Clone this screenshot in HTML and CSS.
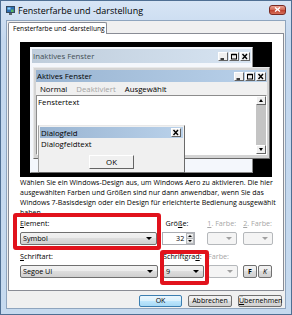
FILE: index.html
```html
<!DOCTYPE html>
<html>

<head>
    <meta charset="UTF-8" />
    <title>Fensterfarbe und -darstellung</title>
    <link rel="stylesheet" href="styles.css">
</head>

<body>
    <div class="window">
        <div class="titlebar">
            <svg class="app-icon" width="9" height="9" viewBox="0 0 9 9">
                <rect x="0.5" y="0.5" width="8" height="6" fill="#2f6fb3" stroke="#34495e" />
                <rect x="1.5" y="1.5" width="3" height="2" fill="#8fd6ff" />
                <rect x="5" y="3.5" width="2.5" height="2.5" fill="#5cb85c" />
                <rect x="3" y="7" width="3" height="2" fill="#5a6670" />
            </svg>
            <span class="title">Fensterfarbe und -darstellung</span>
            <span class="close">
                <svg width="7" height="5" viewBox="0 0 7 5">
                    <path d="M1 0.5 L6 4.5 M6 0.5 L1 4.5" stroke="#fff" stroke-width="1.4" />
                </svg>
            </span>
        </div>

        <div class="client">
            <div class="tabs">
                <div class="tab">Fensterfarbe und -darstellung</div>
            </div>

            <div class="panel">
                <!-- preview of the window elements -->
                <div class="preview">
                    <div class="pwin inactive">
                        <div class="caption">
                            <span class="cap-text">Inaktives Fenster</span>
                            <span class="capbtns">
                                <span class="cb"><svg width="8" height="7" viewBox="0 0 8 7"><path d="M1.5 6 H5" stroke="#000" stroke-width="1.5" /></svg></span>
                                <span class="cb"><svg width="8" height="7" viewBox="0 0 8 7"><rect x="1.5" y="1.5" width="5" height="4.5" fill="none" stroke="#000" /><path d="M1.5 1.5 H6.5" stroke="#000" stroke-width="1.5" /></svg></span>
                                <span class="cb cb-x"><svg width="8" height="7" viewBox="0 0 8 7"><path d="M1.5 1 L6 6 M6 1 L1.5 6" stroke="#000" stroke-width="1.4" /></svg></span>
                            </span>
                        </div>
                    </div>

                    <div class="pwin active">
                        <div class="caption">
                            <span class="cap-text">Aktives Fenster</span>
                            <span class="capbtns">
                                <span class="cb"><svg width="8" height="7" viewBox="0 0 8 7"><path d="M1.5 6 H5" stroke="#000" stroke-width="1.5" /></svg></span>
                                <span class="cb"><svg width="8" height="7" viewBox="0 0 8 7"><rect x="1.5" y="1.5" width="5" height="4.5" fill="none" stroke="#000" /><path d="M1.5 1.5 H6.5" stroke="#000" stroke-width="1.5" /></svg></span>
                                <span class="cb cb-x"><svg width="8" height="7" viewBox="0 0 8 7"><path d="M1.5 1 L6 6 M6 1 L1.5 6" stroke="#000" stroke-width="1.4" /></svg></span>
                            </span>
                        </div>
                        <div class="menu">
                            <span>Normal</span>
                            <span class="dis">Deaktiviert</span>
                            <span>Ausgewählt</span>
                        </div>
                        <div class="textarea">
                            <span class="ftext">Fenstertext</span>
                            <div class="scroll">
                                <span class="sbtn"><i class="tri-up"></i></span>
                                <span class="sbtn"><i class="tri-down"></i></span>
                            </div>
                        </div>
                    </div>

                    <div class="pwin dialog">
                        <div class="caption">
                            <span class="cap-text">Dialogfeld</span>
                            <span class="cb cb-x"><svg width="8" height="7" viewBox="0 0 8 7"><path d="M1.5 1 L6 6 M6 1 L1.5 6" stroke="#000" stroke-width="1.4" /></svg></span>
                        </div>
                        <div class="dtext">Dialogfeldtext</div>
                        <div class="dbtn">OK</div>
                    </div>
                </div>

                <p class="info">
                    Wählen Sie ein Windows-Design aus, um Windows Aero zu aktivieren. Die hier<br />
                    ausgewählten Farben und Größen sind nur dann anwendbar, wenn Sie das<br />
                    Windows 7-Basisdesign oder ein Design für erleichterte Bedienung ausgewählt<br />
                    haben.
                </p>

                <div class="fields">
                    <div class="row">
                        <div class="field f-wide">
                            <label><u>E</u>lement:</label>
                            <div class="combo"><span>Symbol</span><i class="arrow"></i></div>
                        </div>
                        <div class="field f-size">
                            <label class="indent">Grö<u>ß</u>e:</label>
                            <div class="spin">
                                <span class="spin-value">32</span>
                                <span class="spinbtns">
                                    <span class="spinbtn"><i class="tri-up"></i></span>
                                    <span class="spinbtn"><i class="tri-down"></i></span>
                                </span>
                            </div>
                        </div>
                        <div class="field f-color first-color">
                            <label class="off"><u>1</u>. Farbe:</label>
                            <div class="combo off"><i class="arrow"></i></div>
                        </div>
                        <div class="field f-color second-color">
                            <label class="off"><u>2</u>. Farbe:</label>
                            <div class="combo off"><i class="arrow"></i></div>
                        </div>
                    </div>
                    <div class="row">
                        <div class="field f-wide">
                            <label><u>S</u>chriftart:</label>
                            <div class="combo"><span>Segoe UI</span><i class="arrow"></i></div>
                        </div>
                        <div class="field f-grade">
                            <label>Schriftgra<u>d</u>:</label>
                            <div class="combo"><span>9</span><i class="arrow"></i></div>
                        </div>
                        <div class="field f-color font-color">
                            <label class="off">Farbe:</label>
                            <div class="combo off"><i class="arrow"></i></div>
                        </div>
                        <button class="btn small bold">F</button>
                        <button class="btn small italic">K</button>
                    </div>
                </div>

                <div class="mark mark-element"></div>
                <div class="mark mark-grade"></div>
            </div>

            <div class="actions">
                <button class="btn default">OK</button>
                <button class="btn">Abbrechen</button>
                <button class="btn"><u>Ü</u>bernehmen</button>
            </div>
        </div>
    </div>
</body>

</html>
```

FILE: styles.css
```css
* {
    box-sizing: border-box;
}

body {
    margin: 0;
    background: #fff;
    font-family: "Open Sans", "Noto Sans", sans-serif;
    font-size: 7.2px;
    color: #000;
}

u {
    text-decoration-thickness: 1px;
    text-underline-offset: 1px;
}

/* outer window frame */
.window {
    width: 292px;
    height: 315px;
    border: 1px solid #4f6f93;
    background: linear-gradient(#d7e5f5, #c3d7ee 40px, #c6daef);
    display: flex;
    flex-direction: column;
}

.titlebar {
    height: 20px;
    display: flex;
    align-items: center;
    padding: 0 5px 0 5px;
}

.app-icon {
    display: block;
}

.title {
    flex: 1;
    margin-left: 3px;
    font-size: 9px;
}

.close {
    width: 17px;
    height: 10px;
    margin-top: -2px;
    border: 1px solid #7a2a22;
    border-radius: 3px;
    background: linear-gradient(#eba494, #d26b58 45%, #c0422f 55%, #d6705a);
    display: flex;
    align-items: center;
    justify-content: center;
}

.close svg {
    display: block;
}

.client {
    flex: 1;
    margin: 0 5px 5px 5px;
    border: 1px solid #8fa5be;
    background: #f0f0f0;
    display: flex;
    flex-direction: column;
    padding: 0 1px 1px 1px;
}

/* tab strip */
.tabs {
    display: flex;
    padding-top: 1px;
}

.tab {
    position: relative;
    z-index: 1;
    width: 99px;
    height: 12px;
    margin-bottom: -1px;
    border: 1px solid #898c95;
    border-bottom: none;
    border-radius: 2px 2px 0 0;
    background: #fff;
    font-size: 6.6px;
    line-height: 11px;
    padding-left: 4px;
    white-space: nowrap;
}

.panel {
    position: relative;
    height: 258px;
    border: 1px solid #898c95;
    background: #fff;
    padding: 8px 10px 0 11px;
}

/* preview with the sample windows */
.preview {
    position: relative;
    width: 252px;
    height: 135px;
    background: #000;
}

.pwin {
    position: absolute;
    display: flex;
    flex-direction: column;
    border: 1px solid;
}

.caption {
    display: flex;
    align-items: center;
    justify-content: space-between;
    padding: 0 1px 0 1px;
    white-space: nowrap;
}

.capbtns {
    display: flex;
    gap: 1px;
}

.cb {
    width: 10px;
    height: 9px;
    background: #f0f0f0;
    border: 1px solid;
    border-color: #fff #646464 #646464 #fff;
    display: flex;
    align-items: center;
    justify-content: center;
}

.cb svg {
    display: block;
}

.inactive {
    left: 10px;
    top: 5px;
    width: 223px;
    height: 126px;
    padding: 1px;
    background: #f4f7fc;
    border-color: #f4f7fc #8a8a8a #8a8a8a #f4f7fc;
}

.inactive .caption {
    height: 14px;
    background: linear-gradient(to right, #bfcddb, #d7e4f2);
    color: #434e54;
    font-size: 7.8px;
}

.active {
    left: 13px;
    top: 25px;
    width: 237px;
    height: 92px;
    padding: 2px 2px 3px 2px;
    background: #d4d4d4;
    border-color: #e8e8e8 #6a6a6a #6a6a6a #e8e8e8;
}

.active .caption {
    height: 12px;
    background: linear-gradient(to right, #99b4d1, #b9d1ea);
    font-size: 7.8px;
}

.menu {
    height: 13px;
    display: flex;
    align-items: center;
    gap: 9px;
    padding-left: 4px;
    background: #f0f0f0;
    font-size: 7.8px;
}

.menu .dis {
    color: #a3a3a3;
}

.textarea {
    flex: 1;
    display: flex;
    background: #fff;
    border: 1px solid;
    border-color: #8c8c8c #fff #fff #8c8c8c;
}

.ftext {
    flex: 1;
    padding: 1px 0 0 1px;
    font-size: 7.8px;
    line-height: 10px;
}

.scroll {
    width: 10px;
    background: #c4c4c4;
    display: flex;
    flex-direction: column;
    justify-content: space-between;
}

.sbtn {
    height: 9px;
    background: #f0f0f0;
    border: 1px solid;
    border-color: #fff #646464 #646464 #fff;
    display: flex;
    align-items: center;
    justify-content: center;
}

.tri-up,
.tri-down {
    display: block;
    width: 0;
    height: 0;
    border-left: 2.5px solid transparent;
    border-right: 2.5px solid transparent;
}

.tri-up {
    border-bottom: 3px solid #000;
}

.tri-down {
    border-top: 3px solid #000;
}

.dialog {
    left: 18px;
    top: 83px;
    width: 147px;
    height: 48px;
    padding: 1px 1px 2px 1px;
    background: #f0f0f0;
    border-color: #e8e8e8 #6a6a6a #6a6a6a #a0a0a0;
}

.dialog .caption {
    height: 11px;
    padding-right: 2px;
    background: linear-gradient(to right, #99b4d1, #b9d1ea);
    font-size: 7.8px;
}

.dtext {
    height: 12px;
    line-height: 13px;
    padding-left: 1px;
    font-size: 7.8px;
}

.dbtn {
    align-self: center;
    width: 45px;
    height: 14px;
    margin-top: 5px;
    border: 1px solid;
    border-color: #fff #646464 #646464 #fff;
    background: #f0f0f0;
    text-align: center;
    line-height: 12px;
    font-size: 7.8px;
}

/* description */
.info {
    margin: 1px 0 0 0;
    line-height: 10px;
    font-size: 7px;
    white-space: nowrap;
}

/* form fields */
.fields {
    display: flex;
    flex-direction: column;
    gap: 6px;
}

.row {
    display: flex;
    align-items: flex-end;
}

.field {
    display: flex;
    flex-direction: column;
    gap: 4px;
}

.field label {
    height: 10px;
    line-height: 10px;
    white-space: nowrap;
}

.field label.off {
    color: #a6a6a6;
}

.field label.indent {
    padding-left: 3px;
}

.f-wide {
    width: 138px;
}

.f-size {
    width: 33px;
    margin-left: 5px;
}

.f-grade {
    width: 41px;
    margin-left: 5px;
}

.f-color {
    width: 30px;
}

.first-color {
    margin-left: 12px;
}

.second-color {
    margin-left: 6px;
}

.font-color {
    margin-left: 4px;
}

.combo {
    position: relative;
    height: 13px;
    border: 1px solid #707070;
    border-radius: 2px;
    background: linear-gradient(#f2f2f2, #ebebeb 50%, #dddddd 50%, #cfcfcf);
    padding-left: 2px;
    line-height: 11px;
    white-space: nowrap;
}

.combo .arrow {
    position: absolute;
    right: 4px;
    top: 4px;
    width: 0;
    height: 0;
    border-left: 3px solid transparent;
    border-right: 3px solid transparent;
    border-top: 3px solid #000;
}

.combo.off {
    border-color: #b5b8bb;
    background: #f4f4f4;
}

.combo.off .arrow {
    border-top-color: #a0a0a0;
}

.spin {
    display: flex;
    height: 13px;
    border: 1px solid #abadb3;
    background: #fff;
}

.spin-value {
    flex: 1;
    text-align: right;
    padding-right: 2px;
    line-height: 11px;
}

.spinbtns {
    width: 8px;
    display: flex;
    flex-direction: column;
}

.spinbtn {
    flex: 1;
    display: flex;
    align-items: center;
    justify-content: center;
    border: 1px solid #b5b8bb;
    background: linear-gradient(#f2f2f2, #dedede);
}

.spinbtn + .spinbtn {
    border-top: none;
}

.spinbtn .tri-up,
.spinbtn .tri-down {
    border-left-width: 2px;
    border-right-width: 2px;
}

.spinbtn .tri-up {
    border-bottom-width: 2px;
}

.spinbtn .tri-down {
    border-top-width: 2px;
}

/* buttons */
.btn {
    height: 12px;
    padding: 0;
    border: 1px solid #707070;
    border-radius: 2px;
    background: linear-gradient(#f2f2f2, #ebebeb 50%, #dddddd 50%, #cfcfcf);
    font-family: inherit;
    font-size: 7px;
    line-height: 10px;
    color: #000;
}

.btn.small {
    width: 14px;
    height: 13px;
    margin-left: 5px;
}

.btn.small + .btn.small {
    margin-left: 1px;
}

.bold {
    font-weight: bold;
}

.italic {
    font-style: italic;
}

.actions {
    display: flex;
    justify-content: flex-end;
    gap: 6px;
    margin-top: 4px;
    padding-right: 2px;
}

.actions .btn {
    width: 44px;
}

.actions .btn.default {
    width: 43px;
    border-color: #3c7fb1;
    background: linear-gradient(#eaf6fd, #d9f0fc 50%, #bee6fd 50%, #a7d9f5);
}

/* red highlight boxes */
.mark {
    position: absolute;
    border: 4px solid #e1121c;
    border-radius: 3px;
}

.mark-element {
    left: 4px;
    top: 179px;
    width: 148px;
    height: 37px;
}

.mark-grade {
    left: 151px;
    top: 216px;
    width: 49px;
    height: 35px;
}
```
